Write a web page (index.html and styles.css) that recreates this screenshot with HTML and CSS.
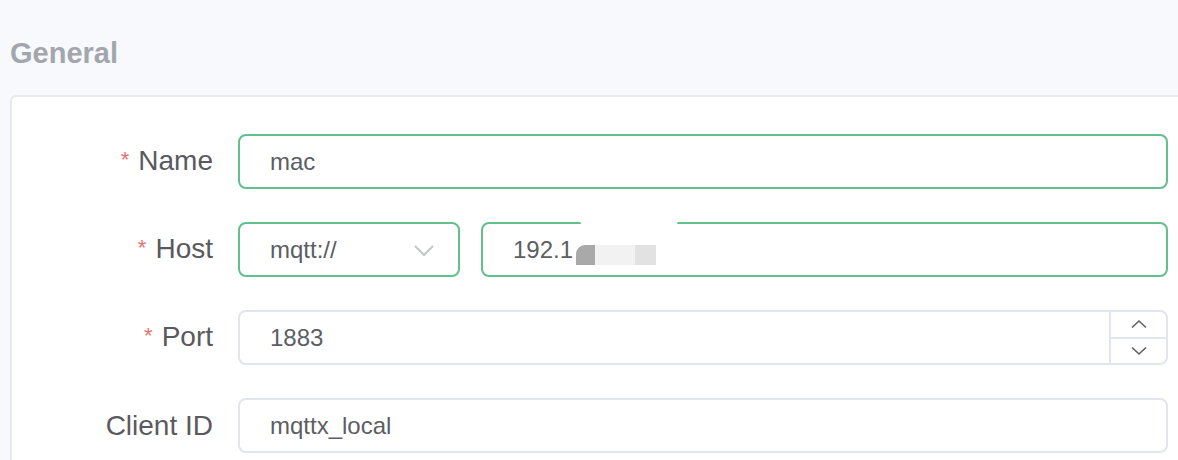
FILE: index.html
```html
<!DOCTYPE html>
<html>
<head>
<meta charset="utf-8">
<link rel="stylesheet" href="styles.css">
</head>
<body>
<div class="page">
  <h2 class="section-title">General</h2>
  <div class="card">
    <form class="form">
      <label class="label"><span class="req">*</span>Name</label>
      <div class="field">
        <div class="input active"><span class="value">mac</span></div>
      </div>

      <label class="label"><span class="req">*</span>Host</label>
      <div class="field host">
        <div class="input active select">
          <span class="value">mqtt://</span>
          <svg class="chev" width="22" height="14" viewBox="0 0 22 14"><path d="M2 2 L11 11 L20 2" fill="none" stroke="#c3c6cd" stroke-width="2"/></svg>
        </div>
        <div class="input active hostinput">
          <span class="value">192.1</span>
          <span class="redact-white"></span>
          <span class="redact"><i class="r1"></i><i class="r2"></i><i class="r3"></i></span>
        </div>
      </div>

      <label class="label"><span class="req">*</span>Port</label>
      <div class="field">
        <div class="input number">
          <span class="value">1883</span>
          <div class="spin">
            <div class="spin-btn up"><svg width="18" height="10" viewBox="0 0 18 10"><path d="M2 8.5 L9 2 L16 8.5" fill="none" stroke="#5c5e63" stroke-width="1.6"/></svg></div>
            <div class="spin-btn down"><svg width="18" height="10" viewBox="0 0 18 10"><path d="M2 1.5 L9 8 L16 1.5" fill="none" stroke="#5c5e63" stroke-width="1.6"/></svg></div>
          </div>
        </div>
      </div>

      <label class="label">Client ID</label>
      <div class="field">
        <div class="input"><span class="value">mqttx_local</span></div>
      </div>
    </form>
  </div>
</div>
</body>
</html>
```

FILE: styles.css
```css
html, body {
  margin: 0;
  padding: 0;
  background: #f8f9fd;
  font-family: "Liberation Sans", Arial, sans-serif;
  overflow: hidden;
}
.page {
  padding: 0 0 0 10px;
  height: 460px;
  overflow: hidden;
}
.section-title {
  margin: 0;
  padding-top: 38px;
  height: 95px;
  box-sizing: border-box;
  font-size: 29px;
  font-weight: bold;
  color: #a3a6ad;
  line-height: 30px;
}
.card {
  background: #ffffff;
  border: 2px solid #e8e9ef;
  border-bottom: 0;
  border-radius: 6px 6px 0 0;
  margin-right: -10px;
  height: 363px;
}
.form {
  display: grid;
  grid-template-columns: 201px 1fr;
  column-gap: 25px;
  row-gap: 33px;
  padding: 37px 18px 0 0;
  align-items: center;
}
.label {
  text-align: right;
  font-size: 28px;
  color: #5a5a5e;
  line-height: 30px;
  white-space: nowrap;
}
.req {
  color: #e9716f;
  font-size: 22px;
  margin-right: 9px;
  position: relative;
  top: -3px;
}
.field {
  display: flex;
  gap: 21px;
}
.input {
  position: relative;
  flex: 1;
  height: 55px;
  box-sizing: border-box;
  border: 2px solid #e3e5ec;
  border-radius: 8px;
  display: flex;
  align-items: center;
  padding-left: 30px;
  font-size: 24px;
  color: #5c5e63;
  background: #fff;
}
.input.active {
  border-color: #62c08d;
}
.select {
  flex: 0 0 222px;
  justify-content: space-between;
  padding-right: 23px;
}
.chev {
  display: block;
  margin-top: 2px;
}
.number .spin {
  position: absolute;
  right: 0;
  top: 0;
  bottom: 0;
  width: 55px;
  border-left: 2px solid #e3e5ec;
  display: flex;
  flex-direction: column;
}
.spin-btn {
  flex: 1;
  display: flex;
  align-items: center;
  justify-content: center;
}
.spin-btn.up {
  border-bottom: 2px solid #e3e5ec;
}
.redact-white {
  position: absolute;
  left: 97px;
  top: -8px;
  width: 98px;
  height: 12px;
  background: #fff;
  border-radius: 0 0 8px 8px;
}
.redact {
  position: absolute;
  left: 93px;
  top: 21px;
  height: 20px;
  display: flex;
}
.redact i {
  display: block;
  height: 20px;
}
.redact .r1 { width: 19px; background: #a9a9a9; border-top-left-radius: 9px; }
.redact .r2 { width: 40px; background: #f2f2f2; }
.redact .r3 { width: 21px; background: #e2e2e2; }
```
